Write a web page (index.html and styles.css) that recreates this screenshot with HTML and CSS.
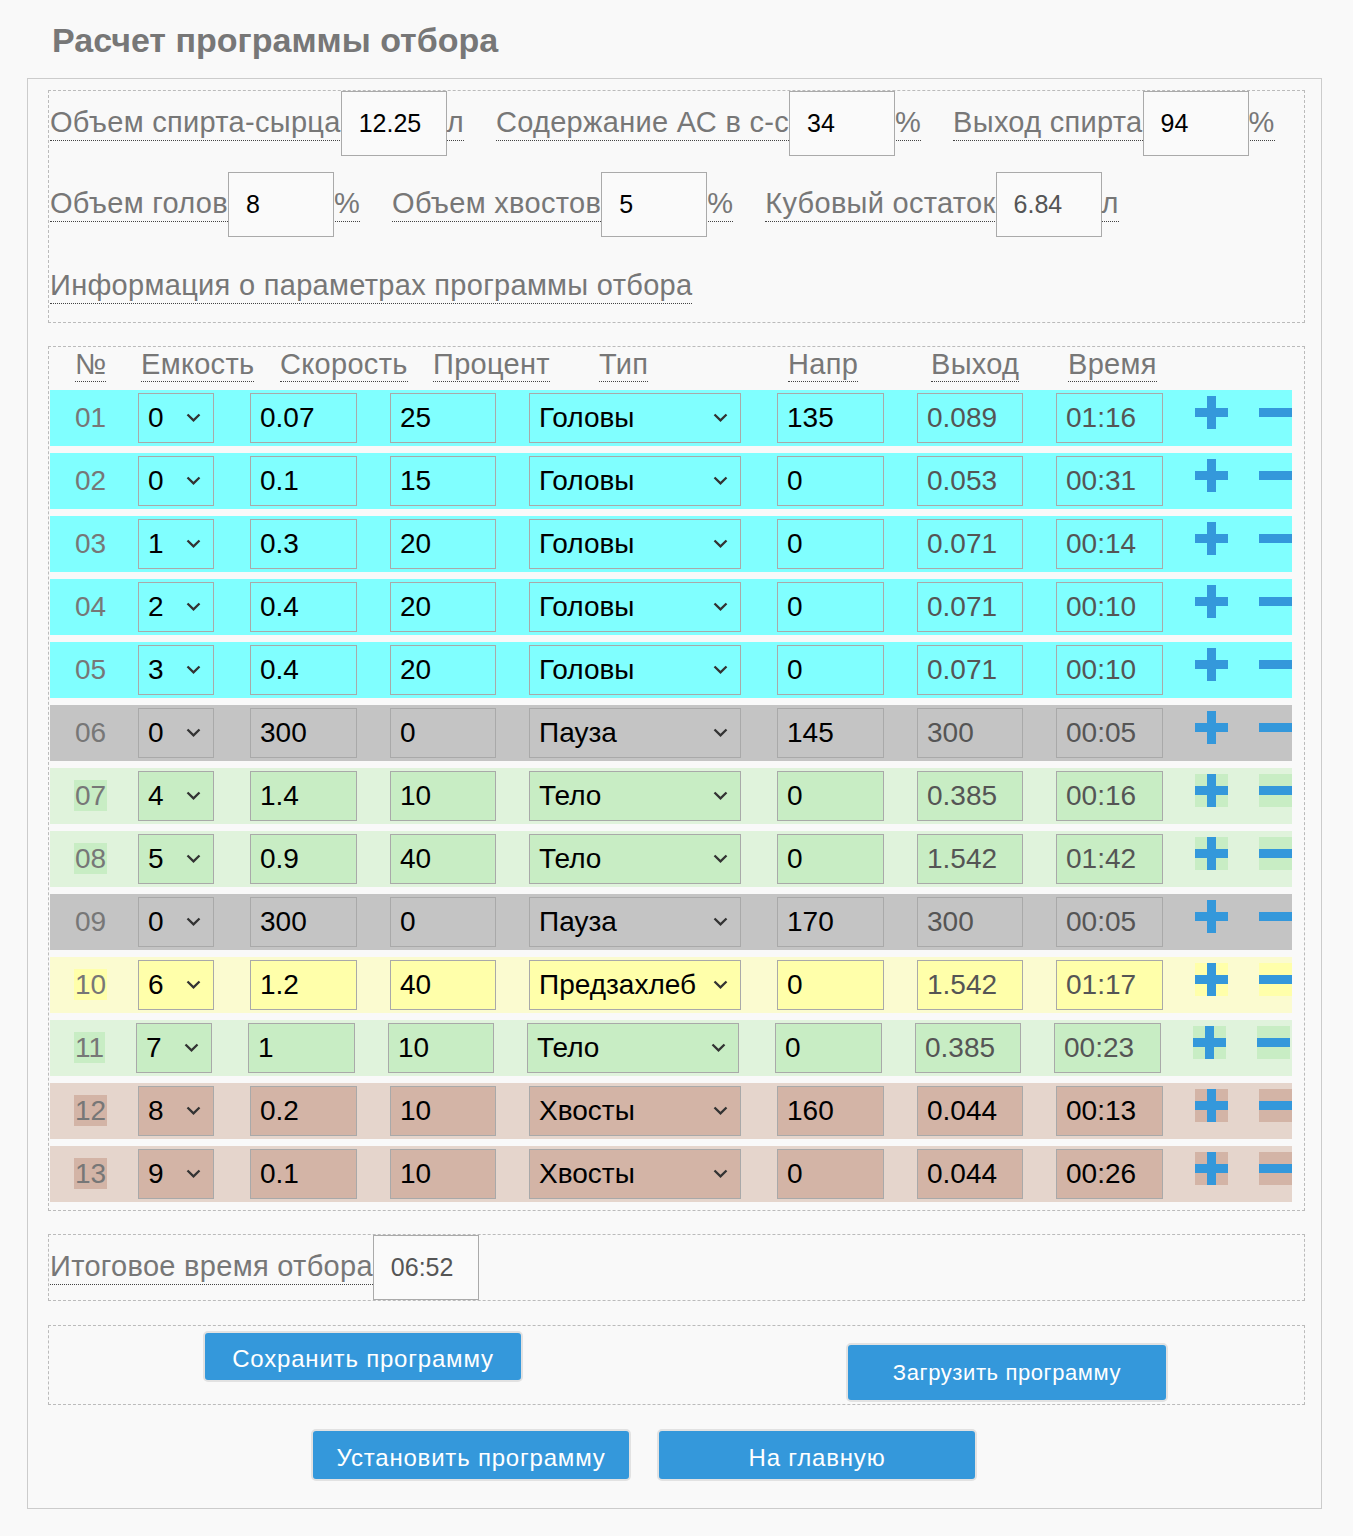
FILE: index.html
```html
<!DOCTYPE html>
<html lang="ru">
<head>
<meta charset="utf-8">
<title>Расчет программы отбора</title>
<link rel="stylesheet" href="styles.css">
</head>
<body>
<h1 class="title">Расчет программы отбора</h1>
<div class="container">
  <div class="box params">
    <div class="prow"><label class="fld">Объем спирта-сырца<input class="pin" value="12.25">л</label><label class="fld">Содержание АС в с-с<input class="pin" value="34">%</label><label class="fld">Выход спирта<input class="pin" value="94">%</label></div>
    <div class="prow"><label class="fld">Объем голов<input class="pin" value="8">%</label><label class="fld">Объем хвостов<input class="pin" value="5">%</label><label class="fld">Кубовый остаток<input class="pin ro" value="6.84" readonly>л</label></div>
    <div class="prow info"><label class="fld">Информация о параметрах программы отбора</label></div>
  </div>

  <div class="box tbl">
    <div class="thead">
      <div class="th w-num"><span class="u">№</span></div>
      <div class="th w-cap"><span class="u">Емкость</span></div>
      <div class="th w-spd"><span class="u">Скорость</span></div>
      <div class="th w-pct"><span class="u">Процент</span></div>
      <div class="th w-typ"><span class="u">Тип</span></div>
      <div class="th w-npr"><span class="u">Напр</span></div>
      <div class="th w-vyh"><span class="u">Выход</span></div>
      <div class="th"><span class="u">Время</span></div>
    </div>
    <div class="rows" id="rows"></div>
  </div>

  <div class="box total"><label class="fld">Итоговое время отбора<input class="pin ro" value="06:52" readonly></label></div>

  <div class="box btnbox">
    <button class="btn btn-save">Сохранить программу</button>
    <button class="btn btn-load">Загрузить программу</button>
  </div>

  <div class="navrow">
    <button class="btn btn-nav">Установить программу</button>
    <button class="btn btn-nav">На главную</button>
  </div>
</div>
<script src="app.js"></script>
</body>
</html>
```
FILE: app.js
```js
const data = [
  ["01","head","0","0.07","25","Головы","135","0.089","01:16"],
  ["02","head","0","0.1","15","Головы","0","0.053","00:31"],
  ["03","head","1","0.3","20","Головы","0","0.071","00:14"],
  ["04","head","2","0.4","20","Головы","0","0.071","00:10"],
  ["05","head","3","0.4","20","Головы","0","0.071","00:10"],
  ["06","pause","0","300","0","Пауза","145","300","00:05"],
  ["07","body","4","1.4","10","Тело","0","0.385","00:16"],
  ["08","body","5","0.9","40","Тело","0","1.542","01:42"],
  ["09","pause","0","300","0","Пауза","170","300","00:05"],
  ["10","pre","6","1.2","40","Предзахлеб","0","1.542","01:17"],
  ["11","body shift","7","1","10","Тело","0","0.385","00:23"],
  ["12","tail","8","0.2","10","Хвосты","160","0.044","00:13"],
  ["13","tail","9","0.1","10","Хвосты","0","0.044","00:26"]
];
const chev = '<svg class="chev" width="15" height="9" viewBox="0 0 15 9"><path d="M1.5 1.5 L7.5 7.3 L13.5 1.5" fill="none" stroke="#333" stroke-width="2.3"/></svg>';
const plus = '<svg width="33" height="33" viewBox="0 0 33 33"><rect x="0" y="12" width="33" height="9" fill="#3498db"/><rect x="12" y="0" width="9" height="33" fill="#3498db"/></svg>';
const minus = '<svg width="33" height="33" viewBox="0 0 33 33"><rect x="0" y="12" width="33" height="9" fill="#3498db"/></svg>';
const rows = document.getElementById('rows');
rows.innerHTML = data.map(r => `
  <div class="row ${r[1]}">
    <div class="num"><span>${r[0]}</span></div>
    <div class="sel c-cap"><span>${r[2]}</span>${chev}</div>
    <input class="ti c-spd" value="${r[3]}">
    <input class="ti c-pct" value="${r[4]}">
    <div class="sel c-typ"><span>${r[5]}</span>${chev}</div>
    <input class="ti c-npr" value="${r[6]}">
    <input class="ti ro c-vyh" value="${r[7]}" readonly>
    <input class="ti ro c-tim" value="${r[8]}" readonly>
    <span class="ic c-plus">${plus}</span>
    <span class="ic c-minus">${minus}</span>
  </div>`).join('');
```
FILE: styles.css
```css
* { box-sizing: border-box; }
body {
  margin: 0;
  background: #f9f9f9;
  font-family: "Liberation Sans", Arial, Helvetica, sans-serif;
}
.title {
  margin: 0;
  height: 78px;
  padding: 21px 0 0 52px;
  font-size: 34px;
  line-height: 39px;
  font-weight: bold;
  color: #777;
}
.container {
  margin-left: 27px;
  width: 1295px;
  border: 1px solid #ccc;
  padding: 11px 16px 27px 20px;
}
.box { border: 1px dashed #bbb; }

/* parameters */
.params { padding: 0 0 20px 1px; }
.prow {
  font-size: 29px;
  letter-spacing: 0.3px;
  color: #777;
  white-space: nowrap;
}
.prow + .prow { margin-top: 16px; }
.prow.info { margin-top: 32px; }
.fld {
  border-bottom: 1px dotted #444;
  padding-bottom: 2px;
  margin-right: 32px;
}
.pin {
  width: 106px;
  height: 65px;
  margin: 0;
  border: 1px solid #aaa;
  background: #fafafa;
  font-family: "Liberation Sans", Arial, sans-serif;
  font-size: 25px;
  letter-spacing: 0;
  color: #000;
  padding: 0 0 0 17px;
  vertical-align: baseline;
  outline: none;
}
.pin.ro { color: #555; }

/* table */
.tbl { margin-top: 23px; padding: 0 12px 8px 1px; }
.thead {
  display: flex;
  height: 43px;
  padding: 1px 0 0 25px;
  font-size: 29px;
  letter-spacing: 0.3px;
  color: #777;
}
.th { flex: none; }
.w-num { width: 66px; }
.w-cap { width: 139px; }
.w-spd { width: 153px; }
.w-pct { width: 166px; }
.w-typ { width: 189px; }
.w-npr { width: 143px; }
.w-vyh { width: 137px; }
.u { border-bottom: 1px dotted #444; padding-bottom: 1px; }

.rows { display: flex; flex-direction: column; gap: 7px; }
.row {
  display: flex;
  align-items: center;
  height: 56px;
  width: 1242px;
  font-size: 28px;
  background: var(--row);
}
.row.head  { --row: #80ffff; --cell: #80ffff; }
.row.pause { --row: #c4c4c4; --cell: #c4c4c4; }
.row.body  { --row: #e0f3dc; --cell: #c8edc4; }
.row.pre   { --row: #fbfbd0; --cell: #ffffaa; }
.row.tail  { --row: #e5d5cc; --cell: #d3b4a6; }

.num {
  flex: none;
  width: 88px;
  padding-left: 24px;
  color: #777;
}
.num span { background: var(--cell); padding: 0 1px; }

.sel, .ti {
  flex: none;
  height: 50px;
  border: 1px solid #a9a9a9;
  background: var(--cell);
  color: #000;
  font-family: "Liberation Sans", Arial, sans-serif;
  font-size: 28px;
}
.sel {
  display: flex;
  align-items: center;
  justify-content: space-between;
  padding: 0 12px 0 9px;
}
.chev { flex: none; margin-top: -2px; }
.ti { margin: 0; padding: 0 0 0 9px; outline: none; }
.ti.ro { color: #555; }
.tail .ti.ro { color: #000; }

.c-cap { width: 76px; }
.c-spd { width: 107px; margin-left: 36px; }
.c-pct { width: 106px; margin-left: 33px; }
.c-typ { width: 212px; margin-left: 33px; }
.c-npr { width: 107px; margin-left: 36px; }
.c-vyh { width: 106px; margin-left: 33px; }
.c-tim { width: 107px; margin-left: 33px; }
.ic {
  flex: none;
  align-self: flex-start;
  margin-top: 6px;
  width: 33px;
  height: 33px;
  background: var(--cell);
  display: block;
}
.ic svg { display: block; }
.c-plus { margin-left: 32px; }
.c-minus { margin-left: 31px; }
.row.shift .sel, .row.shift .ti, .row.shift .ic { position: relative; left: -2px; }

/* total */
.total {
  margin-top: 23px;
  height: 67px;
  padding: 0 0 0 1px;
  font-size: 29px;
  letter-spacing: 0.3px;
  color: #777;
  white-space: nowrap;
}

/* buttons */
.btn {
  background: #3498db;
  color: #fff;
  border: 2px solid #e2e2e2;
  border-radius: 5px;
  font-family: "Liberation Sans", Arial, sans-serif;
  padding: 0;
  flex: none;
}
.btnbox {
  margin-top: 24px;
  height: 80px;
  display: flex;
  align-items: flex-start;
  padding-left: 154px;
}
.btn-save { width: 320px; height: 51px; margin-top: 5px; padding-top: 4px; font-size: 24px; letter-spacing: 0.8px; }
.btn-load { width: 322px; height: 59px; margin-top: 17px; margin-left: 323px; font-size: 22px; letter-spacing: 0.6px; }
.navrow {
  display: flex;
  gap: 26px;
  margin-top: 24px;
  padding-left: 263px;
}
.btn-nav { width: 320px; height: 52px; padding-top: 5px; font-size: 24px; letter-spacing: 0.8px; }
```
